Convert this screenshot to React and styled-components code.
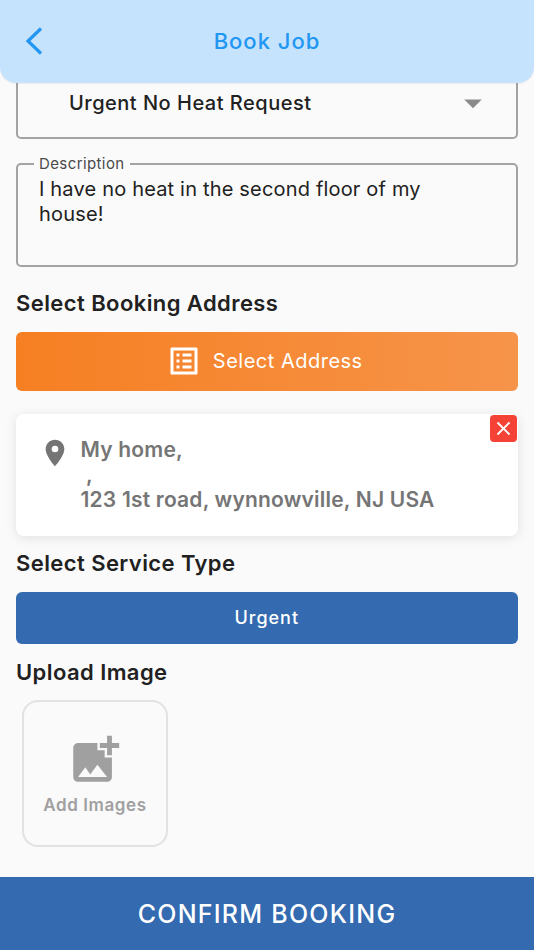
import React from 'react';
import styled, { createGlobalStyle } from 'styled-components';
import { MdListAlt, MdLocationOn, MdAddPhotoAlternate, MdClose, MdArrowDropDown } from 'react-icons/md';

const Global = createGlobalStyle`
  html, body { margin: 0; padding: 0; background: #fafafa; }
  * { box-sizing: border-box; }
  body { font-family: Inter, "Noto Sans", sans-serif; }
`;

const Page = styled.div`
  width: 534px;
  height: 950px;
  display: flex;
  flex-direction: column;
  overflow: hidden;
  background: #fafafa;
`;

const Header = styled.header`
  position: relative;
  z-index: 2;
  flex: none;
  height: 83px;
  padding-bottom: 2px;
  display: flex;
  align-items: center;
  justify-content: center;
  background: #c6e3fd;
  border-radius: 0 0 16px 16px;
  box-shadow: 0 1px 2px rgba(0, 0, 0, 0.06);
`;

const BackButton = styled.svg`
  position: absolute;
  left: 25px;
  top: 27px;
  width: 18px;
  height: 28px;
`;

const Title = styled.h1`
  margin: 0;
  font-size: 22px;
  font-weight: 500;
  letter-spacing: 1px;
  color: #2196f3;
`;

const Content = styled.main`
  flex: 1;
  min-height: 0;
  margin-top: -8px;
  padding: 0 16px;
  display: flex;
  flex-direction: column;
  align-items: stretch;
`;

const Dropdown = styled.div`
  flex: none;
  height: 64px;
  padding: 0 33px 9px 51px;
  display: flex;
  align-items: center;
  justify-content: space-between;
  border: 2px solid #a3a3a3;
  border-radius: 5px;
  font-size: 20px;
  font-weight: 500;
  letter-spacing: 0.5px;
  color: #212121;
`;

const Caret = styled(MdArrowDropDown)`
  font-size: 42px;
  color: #8a8a8a;
  margin-right: -11px;
`;

const Field = styled.fieldset`
  flex: none;
  height: 112px;
  margin: 16px 0 0;
  padding: 4px 60px 0 21px;
  border: 2px solid #a3a3a3;
  border-radius: 5px;
`;

const Legend = styled.legend`
  padding: 0 5px;
  margin-left: -5px;
  font-size: 15px;
  line-height: 18px;
  letter-spacing: 0.4px;
  color: #4a4a4a;
`;

const FieldText = styled.p`
  margin: 0;
  font-size: 20px;
  line-height: 25px;
  letter-spacing: 0.18px;
  color: #212121;
`;

const Heading = styled.h2`
  margin: ${(p) => p.$top}px 0 0;
  font-size: 22px;
  line-height: 26px;
  font-weight: 600;
  letter-spacing: 0.42px;
  color: #212121;
`;

const OrangeButton = styled.button`
  flex: none;
  height: 59px;
  margin: 16px 0 0 -0.5px;
  padding: 0 5px 2px 0;
  display: flex;
  align-items: center;
  justify-content: center;
  gap: 11px;
  border: 0;
  border-radius: 6px;
  background: linear-gradient(90deg, #f67f22, #f6944a);
  color: #fff;
  font-family: inherit;
  font-size: 20px;
  letter-spacing: 0.5px;
`;

const AddressCard = styled.section`
  position: relative;
  flex: none;
  height: 122px;
  margin: 23px 0 0 -0.5px;
  padding: 23px 0 0 23px;
  display: flex;
  gap: 10px;
  background: #fff;
  border-radius: 8px;
  box-shadow: 0 2px 12px rgba(0, 0, 0, 0.1);
`;

const Pin = styled(MdLocationOn)`
  flex: none;
  font-size: 32px;
  color: #757575;
`;

const AddressText = styled.div`
  font-size: 21px;
  line-height: 25px;
  font-weight: 600;
  letter-spacing: 0.2px;
  color: #757575;
`;

const Remove = styled.button`
  position: absolute;
  top: 1px;
  right: 1px;
  width: 27px;
  height: 27px;
  padding: 0;
  display: flex;
  align-items: center;
  justify-content: center;
  border: 0;
  border-radius: 4px;
  background: #f44336;
  color: #fff;
  font-size: 23px;
`;

const BlueButton = styled.button`
  flex: none;
  height: 52px;
  margin: 16px 0 0 -0.5px;
  padding: 0 0 2px;
  border: 0;
  border-radius: 6px;
  background: #336ab0;
  color: #fff;
  font-family: inherit;
  font-size: 18px;
  font-weight: 500;
  letter-spacing: 1px;
`;

const AddImage = styled.button`
  width: 146px;
  height: 147px;
  margin: 15px 0 0 6px;
  padding: 29px 0 0;
  display: flex;
  flex-direction: column;
  align-items: center;
  border: 2px solid #e2e2e2;
  border-radius: 16px;
  background: transparent;
  color: #a0a0a0;
  font-family: inherit;
  font-size: 17px;
  font-weight: 600;
  letter-spacing: 0.6px;
`;

const AddIcon = styled(MdAddPhotoAlternate)`
  font-size: 58px;
  margin-bottom: 6px;
`;

const Footer = styled.button`
  flex: none;
  height: 73px;
  border: 0;
  background: #336ab0;
  color: #fff;
  font-family: inherit;
  font-size: 25px;
  font-weight: 500;
  letter-spacing: 1.25px;
`;

export default function App() {
  return (
    <Page>
      <Global />
      <Header>
        <BackButton viewBox="0 0 18 28" fill="none" stroke="#2196f3" strokeWidth="3.2">
          <path d="M16 1.5 L3 14 L16 26.5" />
        </BackButton>
        <Title>Book Job</Title>
      </Header>
      <Content>
        <Dropdown>
          Urgent No Heat Request
          <Caret />
        </Dropdown>
        <Field>
          <Legend>Description</Legend>
          <FieldText>I have no heat in the second floor of my house!</FieldText>
        </Field>
        <Heading $top={23}>Select Booking Address</Heading>
        <OrangeButton>
          <MdListAlt size={36} />
          Select Address
        </OrangeButton>
        <AddressCard>
          <Pin />
          <AddressText>
            My home,
            <br />
            &nbsp;,
            <br />
            123 1st road, wynnowville, NJ USA
          </AddressText>
          <Remove>
            <MdClose />
          </Remove>
        </AddressCard>
        <Heading $top={14}>Select Service Type</Heading>
        <BlueButton>Urgent</BlueButton>
        <Heading $top={15}>Upload Image</Heading>
        <AddImage>
          <AddIcon />
          Add Images
        </AddImage>
      </Content>
      <Footer>CONFIRM BOOKING</Footer>
    </Page>
  );
}
